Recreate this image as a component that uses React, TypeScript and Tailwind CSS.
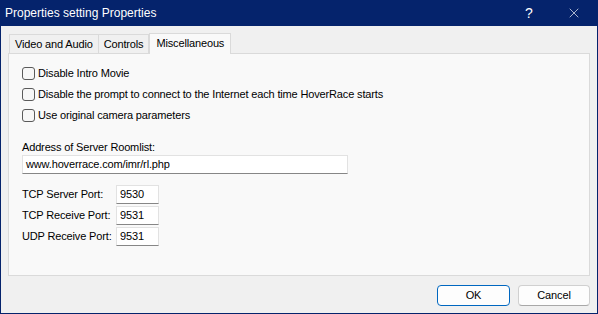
import { X } from "lucide-react";

const font = { fontFamily: '"Liberation Sans", Arial, sans-serif' };

function Check({ label }: { label: string }) {
  return (
    <label className="flex items-center h-[21px] gap-[3px]">
      <span className="w-[13px] h-[13px] rounded-[3px] border border-[#5a5a5a] bg-[#f7f7f7]" />
      <span>{label}</span>
    </label>
  );
}

function Port({ label, value }: { label: string; value: string }) {
  return (
    <div className="flex items-center h-[21px]">
      <span className="w-[94px] whitespace-nowrap">{label}</span>
      <div className="w-[43px] h-[19px] bg-white border border-[#e2e2e2] border-b-[#868686] pl-[3px] leading-[17px]">{value}</div>
    </div>
  );
}

export default function App() {
  return (
    <div className="w-[598px] h-[314px] flex flex-col bg-[#05236c] text-[11px] tracking-[-0.15px] text-black" style={font}>
      <div className="h-[26px] flex items-center text-white text-[12px] tracking-normal pl-[5px] shrink-0">
        <span className="flex-1">Properties setting Properties</span>
        <span className="w-[46px] text-center text-[14px]">?</span>
        <span className="w-[46px] flex justify-center pr-[2px]"><X size={16} strokeWidth={1} /></span>
      </div>
      <div className="flex-1 mx-[1px] mb-[1px] bg-[#f0f0f0] flex flex-col px-[7px] pt-[7px]">
        <div className="flex items-end h-[20px] pl-[1px]">
          <div className="h-[19px] px-[5px] border border-b-0 border-[#dadada] bg-[#f0f0f0] leading-[18px]">Video and Audio</div>
          <div className="h-[19px] px-[5px] border border-b-0 border-l-0 border-[#dadada] bg-[#f0f0f0] leading-[18px]">Controls</div>
          <div className="h-[21px] px-[6px] border border-b-0 border-[#dadada] bg-[#f9f9f9] leading-[19px] -mb-[1px] relative z-10">Miscellaneous</div>
        </div>
        <div className="h-[223px] border border-[#dadada] bg-[#f9f9f9] pl-[13px] pt-[9px] flex flex-col">
          <Check label="Disable Intro Movie" />
          <Check label="Disable the prompt to connect to the Internet each time HoverRace starts" />
          <Check label="Use original camera parameters" />
          <div className="mt-[14px] leading-[14px]">Address of Server Roomlist:</div>
          <div className="mt-[1px] w-[326px] h-[19px] bg-white border border-[#e2e2e2] border-b-[#868686] pl-[3px] leading-[17px]">www.hoverrace.com/imr/rl.php</div>
          <div className="mt-[10px] flex flex-col">
            <Port label="TCP Server Port:" value="9530" />
            <Port label="TCP Receive Port:" value="9531" />
            <Port label="UDP Receive Port:" value="9531" />
          </div>
        </div>
        <div className="flex justify-end gap-[8px] mt-[9px]">
          <button className="w-[73px] h-[21px] rounded-[4px] border border-[#0067c0] bg-[#fdfdfd] text-[11px]">OK</button>
          <button className="w-[72px] h-[21px] rounded-[4px] border border-[#d0d0d0] border-b-[#a8a8a8] bg-[#fdfdfd] text-[11px]">Cancel</button>
        </div>
      </div>
    </div>
  );
}
